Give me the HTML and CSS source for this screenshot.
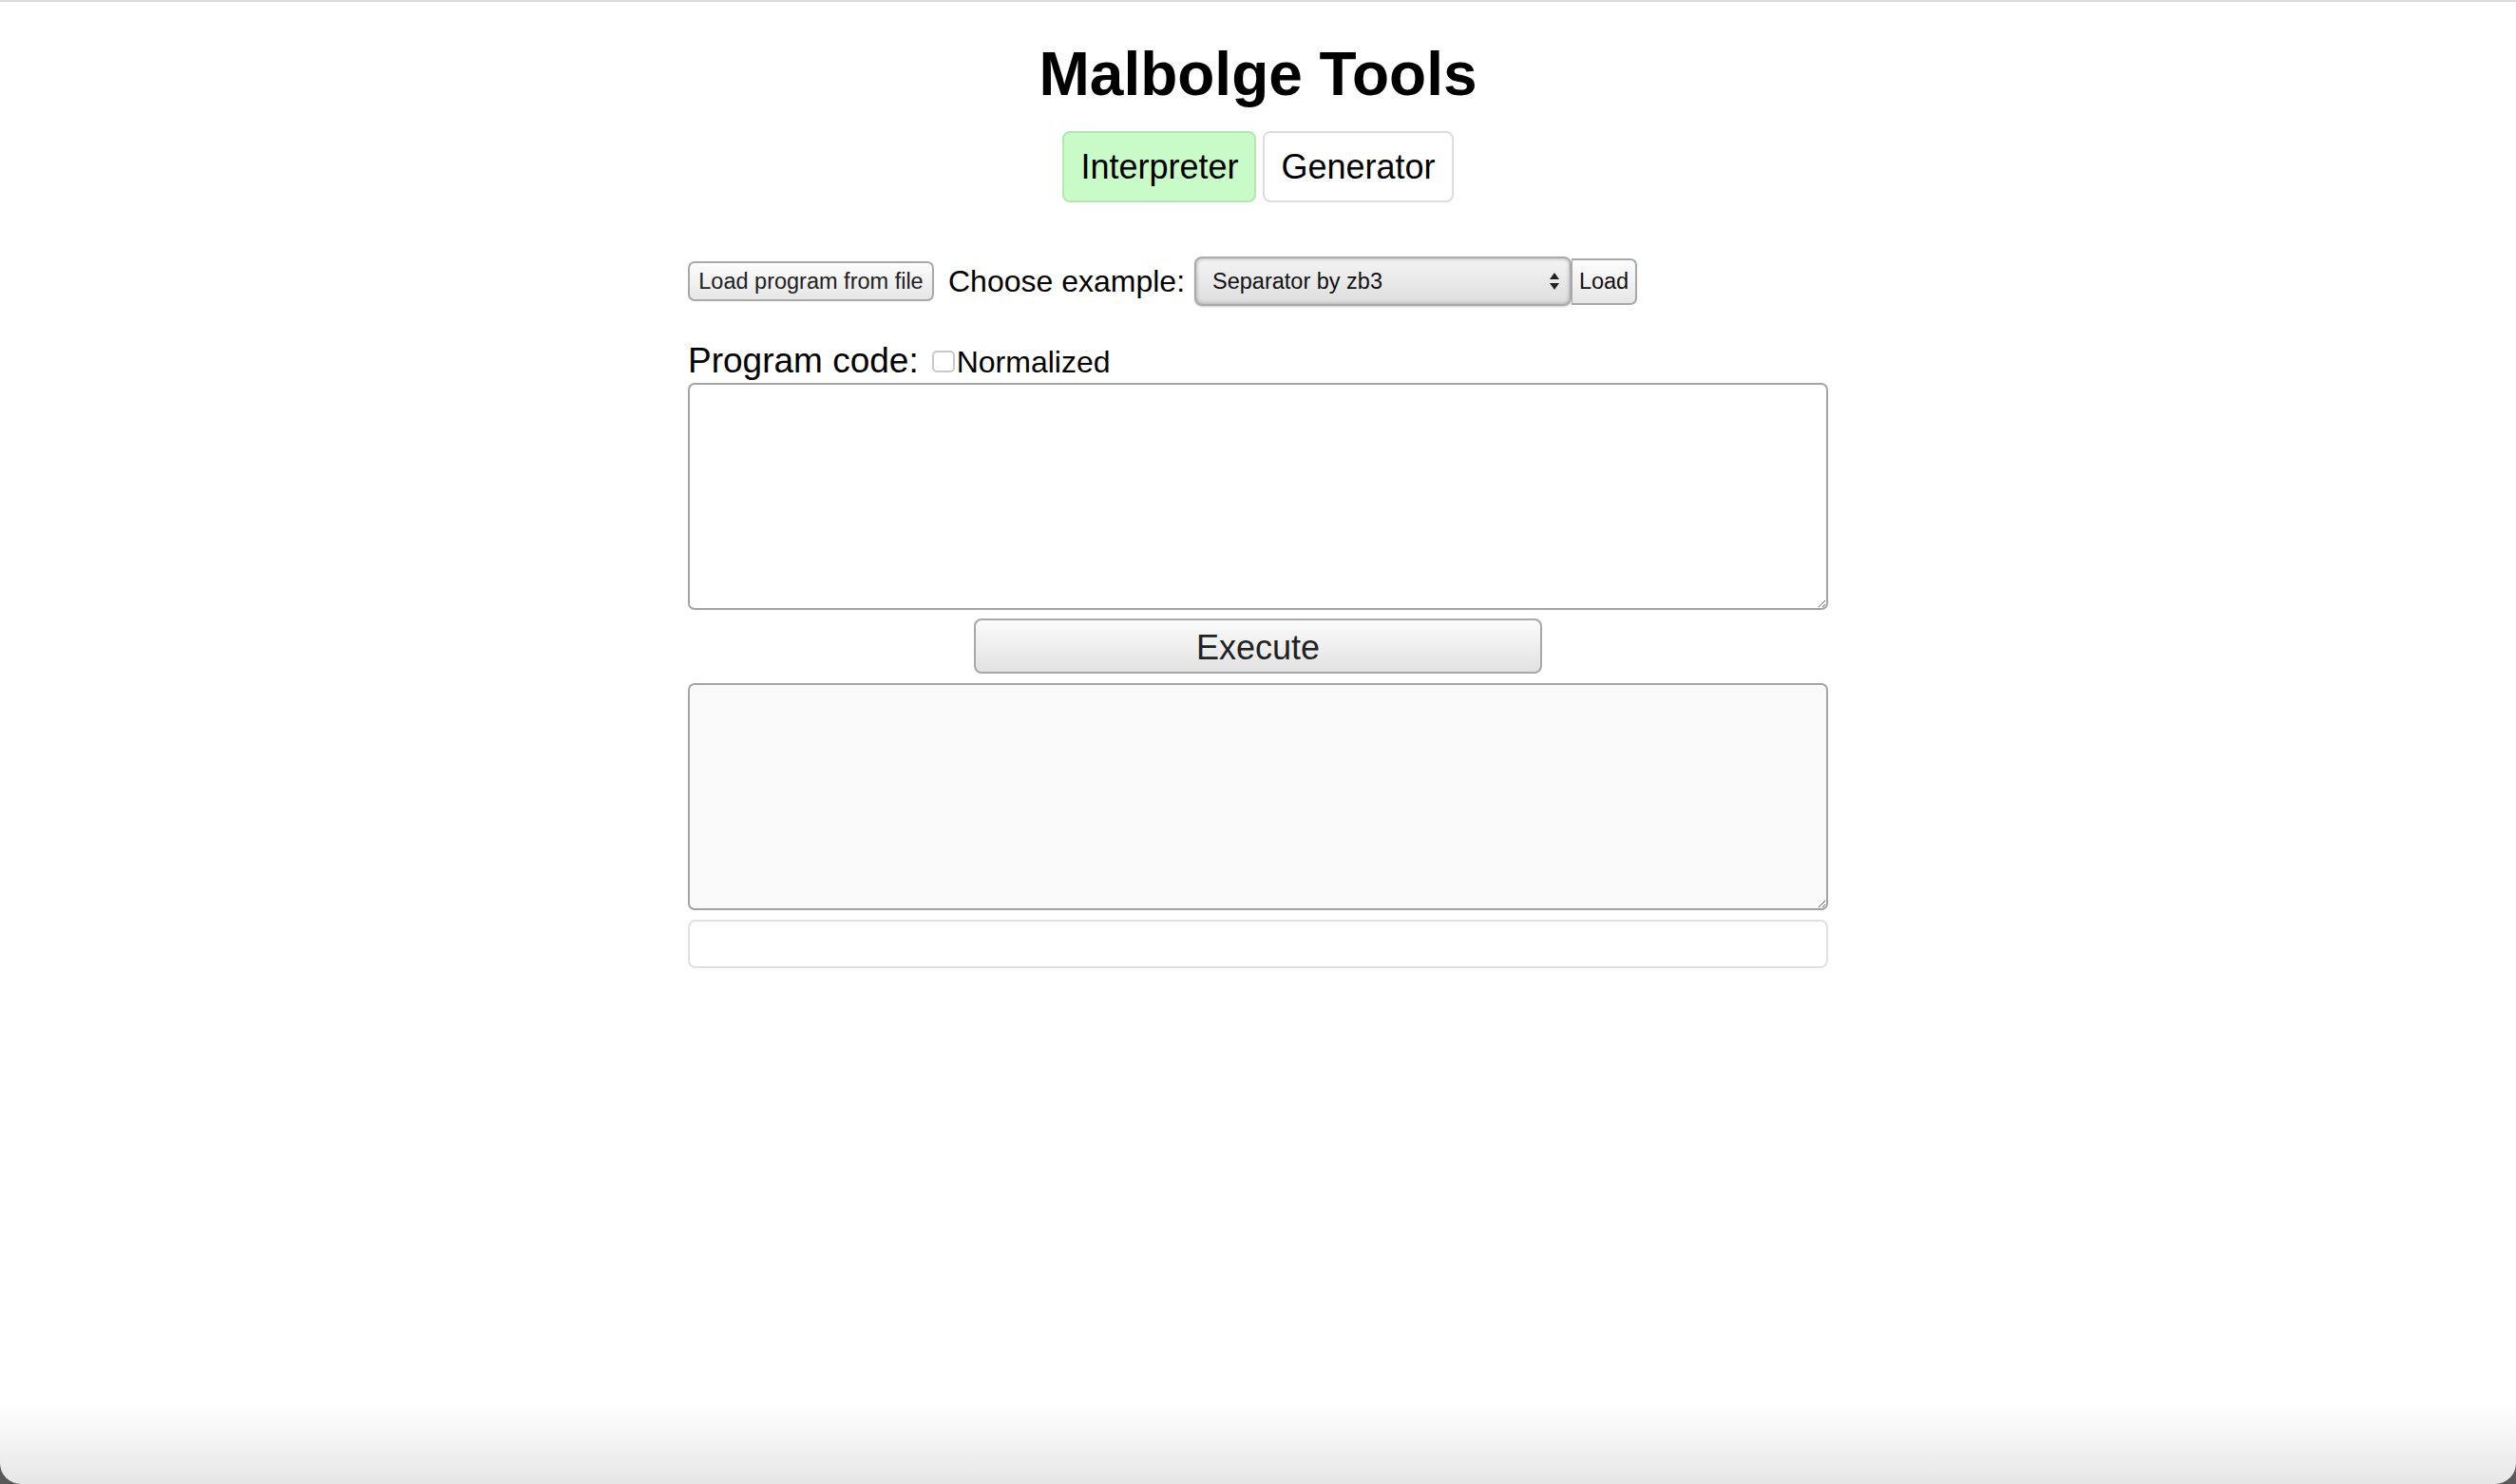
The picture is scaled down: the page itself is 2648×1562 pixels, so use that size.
FILE: index.html
```html
<!DOCTYPE html>
<html lang="en">
<head>
<meta charset="utf-8">
<title>Malbolge Tools</title>
<link rel="stylesheet" href="styles.css">
</head>
<body>
<div class="window">
  <h1 class="title">Malbolge Tools</h1>
  <nav class="tabs">
    <button class="tab tab-active">Interpreter</button>
    <button class="tab">Generator</button>
  </nav>
  <main class="main">
    <div class="toolbar">
      <button class="btn btn-file">Load program from file</button>
      <span class="choose-label">Choose example:</span>
      <div class="select-group">
        <div class="select">
          <span class="select-text">Separator by zb3</span>
          <svg class="select-arrows" width="12" height="22" viewBox="0 0 12 22"><path d="M6 2 L11 9 L1 9 Z" fill="#222"/><path d="M1 13 L11 13 L6 20 Z" fill="#222"/></svg>
        </div>
        <button class="btn btn-load">Load</button>
      </div>
    </div>
    <div class="code-label-row">
      <span class="code-label">Program code:</span>
      <label class="norm"><span class="checkbox"></span>Normalized</label>
    </div>
    <textarea class="code-area"></textarea>
    <button class="execute">Execute</button>
    <textarea class="output-area"></textarea>
    <div class="status"></div>
  </main>
</div>
</body>
</html>
```
FILE: styles.css
```css
html {
  background: #5a5a5a;
}
body {
  margin: 0;
  font-family: "Liberation Sans", Arial, Helvetica, sans-serif;
  color: #000;
}
.window {
  min-height: 100vh;
  box-sizing: border-box;
  border-top: 2px solid #dcdcdc;
  border-radius: 0 0 22px 22px;
  background: linear-gradient(to bottom, #ffffff calc(100% - 85px), #e6e6e6 100%);
  display: flex;
  flex-direction: column;
  align-items: center;
}
.title {
  margin: 39px 0 0;
  font-size: 64px;
  font-weight: bold;
  line-height: 74px;
}
.tabs {
  margin-top: 23px;
  display: flex;
  gap: 7px;
}
.tab {
  font-family: "Liberation Sans", Arial, sans-serif;
  font-size: 36px;
  line-height: 41px;
  padding: 15px 17px;
  border: 2px solid #dddddd;
  border-radius: 8px;
  background: #ffffff;
  color: #000;
}
.tab-active {
  background: #c8fbc8;
  border-color: #b3e6b3;
}
.main {
  width: 1200px;
  margin-top: 57px;
  display: flex;
  flex-direction: column;
}
.toolbar {
  display: flex;
  align-items: center;
  height: 52px;
}
.btn {
  font-family: "Liberation Sans", Arial, sans-serif;
  font-size: 23.5px;
  color: #222;
  border: 2px solid #a8a8a8;
  border-radius: 7px;
  background: linear-gradient(to bottom, #fdfdfd, #e6e6e6);
  height: 42px;
  box-sizing: border-box;
  padding: 0 8px;
}
.btn-file {
  width: 259px;
}
.choose-label {
  font-size: 32px;
  margin-left: 15px;
  margin-right: 10px;
}
.select-group {
  display: flex;
  align-items: center;
}
.select {
  width: 397px;
  height: 52px;
  box-sizing: border-box;
  border: 2px solid #aaaaaa;
  border-radius: 8px;
  background: linear-gradient(to bottom, #f4f4f4, #dedede);
  box-shadow: inset 0 0 4px rgba(0,0,0,0.3), 0 1px 2px rgba(0,0,0,0.2);
  display: flex;
  align-items: center;
  justify-content: space-between;
  padding: 0 10px 0 17px;
}
.select-text {
  font-size: 23.5px;
  color: #111;
}
.btn-load {
  height: 49px;
  width: 69px;
  padding: 0;
  border-radius: 0 7px 7px 0;
  border-left-width: 1px;
  color: #111;
}
.code-label-row {
  margin-top: 37px;
  line-height: 41px;
  display: flex;
  align-items: baseline;
}
.code-label {
  font-size: 37px;
}
.norm {
  font-size: 32px;
  display: flex;
  align-items: baseline;
}
.checkbox {
  display: inline-block;
  width: 24px;
  height: 23px;
  box-sizing: border-box;
  border: 2px solid #c9c9c9;
  border-radius: 5px;
  background: #fff;
  margin: 0 2px -3px 14px;
}
.code-area,
.output-area {
  display: block;
  width: 1200px;
  height: 239px;
  box-sizing: border-box;
  border: 2px solid #a3a3a3;
  border-radius: 7px;
  font-family: "Liberation Mono", monospace;
  font-size: 26px;
  margin: 1px 0 0;
  padding: 4px;
}
.code-area {
  background: #ffffff;
}
.output-area {
  background: #f9f9f9;
  margin-top: 10px;
}
.execute {
  align-self: center;
  margin-top: 9px;
  width: 598px;
  height: 58px;
  padding-top: 4px;
  font-family: "Liberation Sans", Arial, sans-serif;
  font-size: 36px;
  color: #222;
  border: 2px solid #a8a8a8;
  border-radius: 8px;
  background: linear-gradient(to bottom, #fbfbfb, #e2e2e2);
}
.status {
  margin-top: 10px;
  height: 51px;
  box-sizing: border-box;
  border: 2px solid #e0e0e0;
  border-radius: 8px;
  background: #fff;
}
```
